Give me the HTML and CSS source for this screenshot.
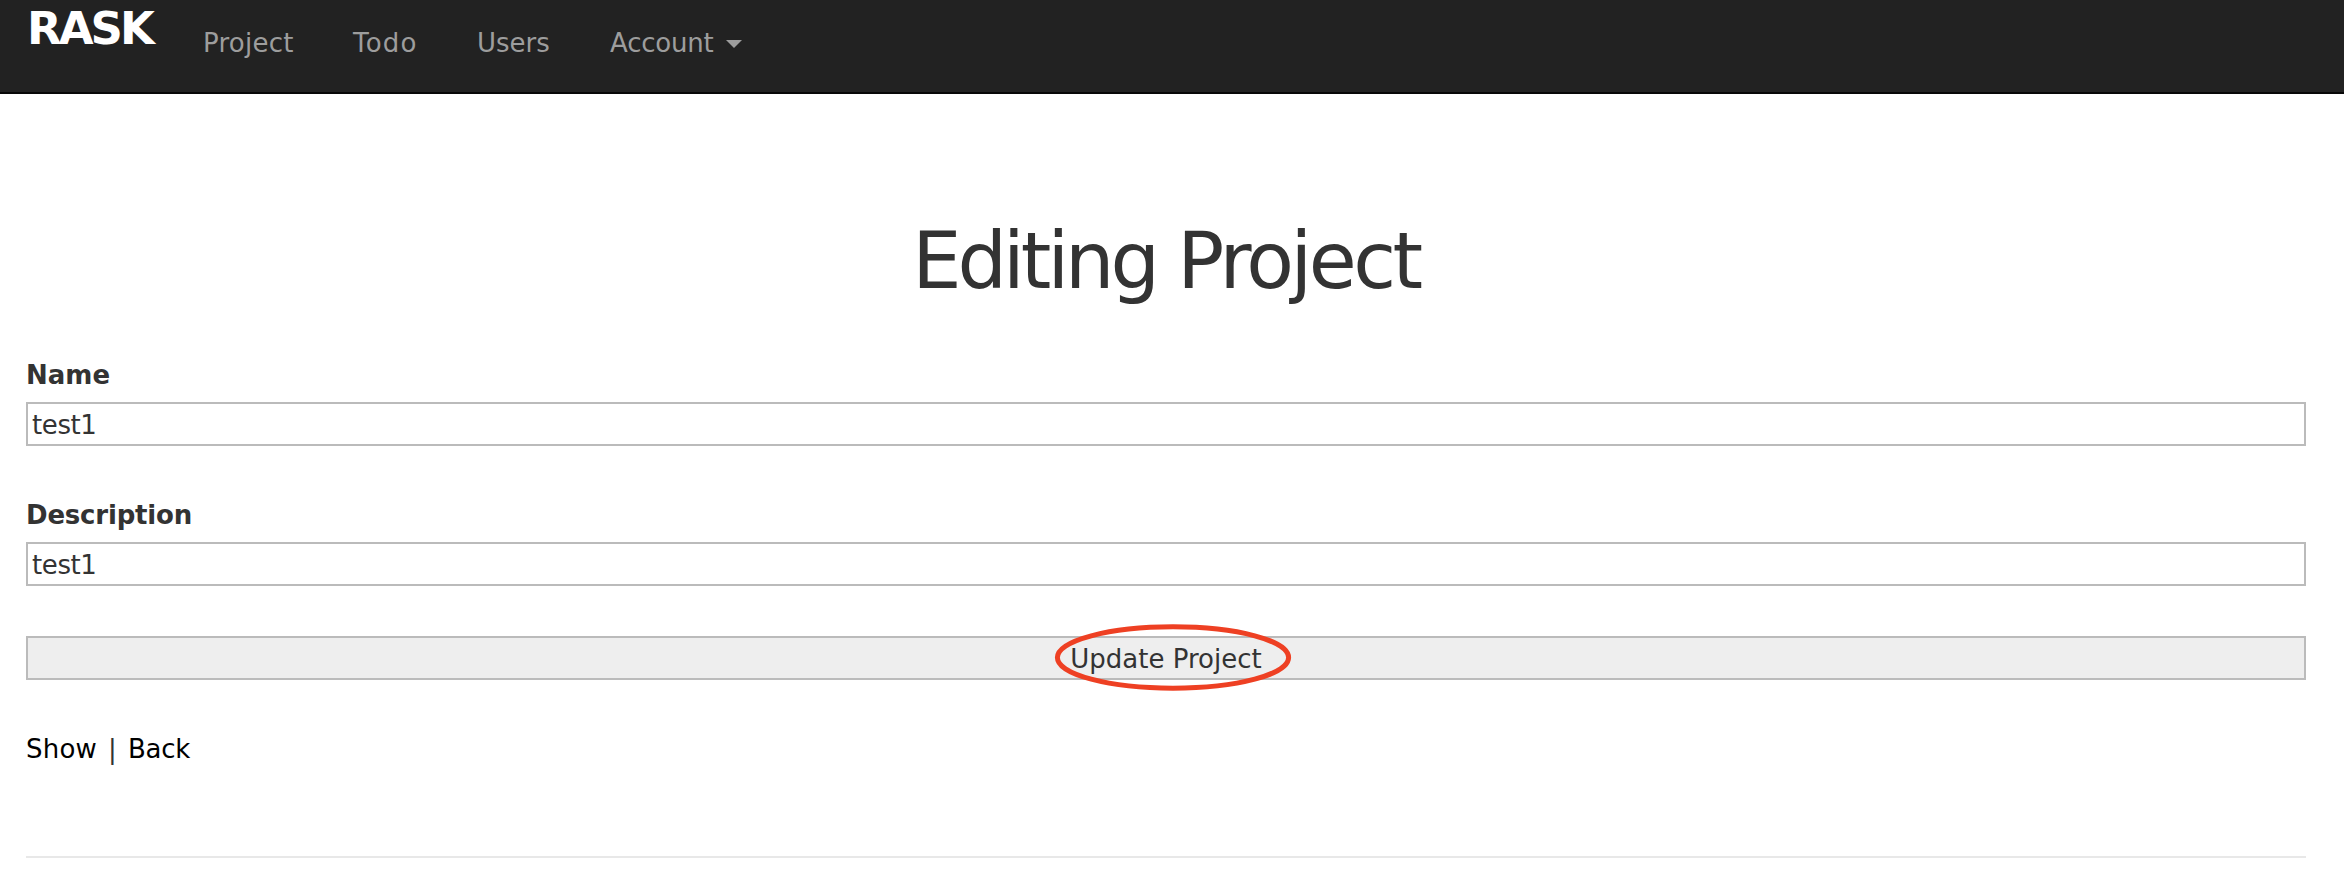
FILE: index.html
```html
<!DOCTYPE html>
<html lang="en">
<head>
<meta charset="utf-8">
<title>Editing Project</title>
<link rel="stylesheet" href="styles.css">
</head>
<body>
<header class="navbar">
  <a class="logo">RASK</a>
  <nav class="menu">
    <a class="item project">Project</a>
    <a class="item todo">Todo</a>
    <a class="item users">Users</a>
    <a class="item account">Account</a>
    <svg class="caret" width="16" height="8" viewBox="0 0 16 8"><path d="M0 0H16L8 8Z" fill="#9d9d9d"/></svg>
  </nav>
</header>
<main class="container">
  <h1 class="title"><span class="title-first">Editing</span> Project</h1>
  <form class="form">
    <label class="label name" for="name">Name</label>
    <input class="field" id="name" type="text" value="test1">
    <label class="label description" for="description">Description</label>
    <input class="field" id="description" type="text" value="test1">
    <button class="submit" type="button"><span class="submit-text">Update Project</span>
      <svg class="ring" width="238" height="67" viewBox="0 0 238 67"><ellipse cx="119" cy="33.5" rx="115.6" ry="30.7" fill="none" stroke="#ee4023" stroke-width="5"/></svg>
    </button>
  </form>
  <p class="links"><a class="show">Show</a><span class="bar">|</span><a class="back">Back</a></p>
  <hr class="rule">
</main>
</body>
</html>
```
FILE: styles.css
```css
* { box-sizing: border-box; }
body {
  margin: 0;
  background: #fff;
  color: #333;
  font: 26px/40px Verdana, "DejaVu Sans", sans-serif;
  overflow: hidden;
}
.navbar {
  display: flex;
  align-items: flex-start;
  height: 94px;
  padding-left: 27px;
  background: #222;
  border-bottom: 2px solid #080808;
}
.logo {
  width: 176px;
  padding-top: 4px;
  color: #fff;
  font-size: 45px;
  line-height: 50px;
  font-weight: bold;
  letter-spacing: -3px;
}
.menu { display: flex; padding-top: 23px; color: #9d9d9d; }
.item { white-space: nowrap; }
.project { width: 150px; letter-spacing: .25px; }
.todo { width: 124px; letter-spacing: 1.2px; }
.users { width: 133px; }
.account { width: 116px; letter-spacing: -.2px; }
.caret { margin-top: 17px; }
.container { padding: 117px 38px 0 26px; }
.title {
  margin: 0 0 44px;
  font-size: 78px;
  line-height: 100px;
  font-weight: normal;
  letter-spacing: -3.5px;
  text-align: center;
}
.title-first { letter-spacing: -4px; }
.form { display: flex; flex-direction: column; }
.label { font-weight: bold; margin-bottom: 7px; }
.description { letter-spacing: -.2px; }
.field {
  height: 44px;
  margin: 0 0 49px;
  padding: 1px 4px 0;
  border: 2px solid #bbb;
  border-radius: 0;
  background: #fff;
  color: #333;
  font: inherit;
  letter-spacing: -.4px;
}
#description { margin-bottom: 50px; }
.submit {
  position: relative;
  height: 44px;
  padding: 1px 0 0;
  border: 2px solid #bbb;
  background: #eee;
  color: #333;
  font: inherit;
  line-height: 40px;
}
.ring { position: absolute; left: 1026.4px; top: -14px; }
.links { display: flex; margin: 49px 0 0; color: #333; }
.show { width: 82px; color: #000; letter-spacing: .2px; }
.bar { width: 20px; }
.back { color: #000; letter-spacing: -.3px; }
.rule { height: 2px; margin: 87px 0 0; border: 0; background: #e8e8e8; }
```
